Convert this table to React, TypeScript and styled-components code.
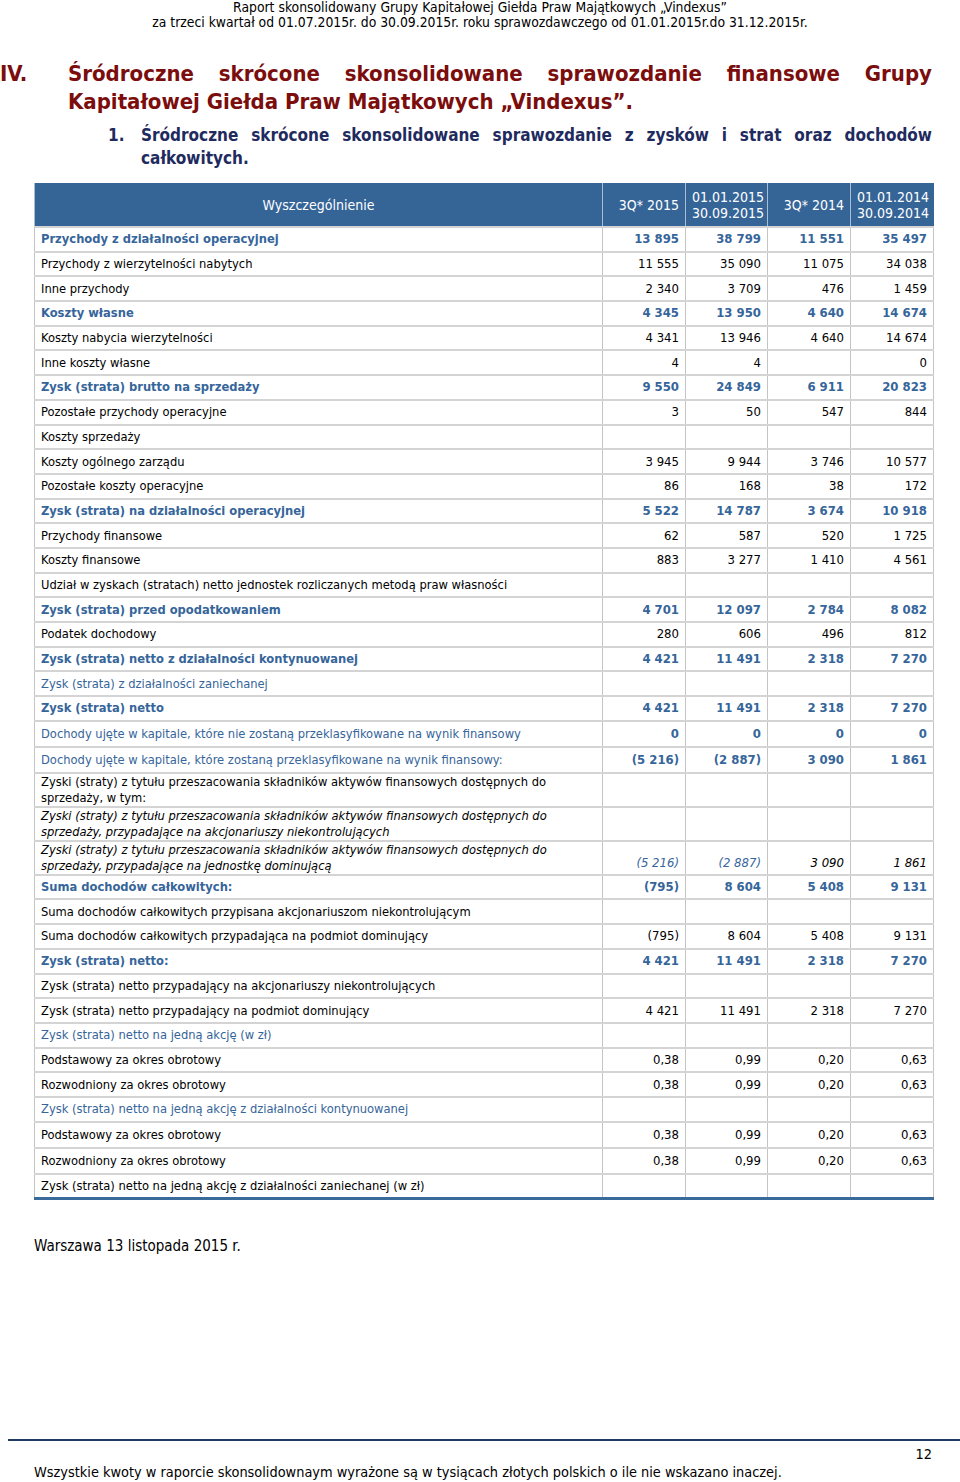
import React from "react";
import styled, { createGlobalStyle, css } from "styled-components";

const Global = createGlobalStyle`
  html, body { margin: 0; padding: 0; background: #ffffff; }
  body { font-family: "DejaVu Sans Condensed", "DejaVu Sans", sans-serif; color: #000; }
`;

const Page = styled.div`
  width: 960px;
  height: 1482px;
  display: flex;
  flex-direction: column;
  box-sizing: border-box;
  overflow: hidden;
`;

const TopHeader = styled.header`
  font-family: "Liberation Sans Narrow", "DejaVu Sans Condensed", sans-serif;
  font-size: 13.8px;
  line-height: 15px;
  text-align: center;
  color: #000;
`;

const SectionTitle = styled.h1`
  margin: 30px 28px 0 0;
  display: grid;
  grid-template-columns: 68px 1fr;
  font-family: "DejaVu Sans Condensed", "DejaVu Sans", sans-serif;
  font-weight: bold;
  font-size: 22px;
  line-height: 28px;
  color: #7b0d0d;
`;

const SubTitle = styled.h2`
  margin: 8px 28px 0 108px;
  display: grid;
  grid-template-columns: 33px 1fr;
  font-family: "DejaVu Sans Condensed", "DejaVu Sans", sans-serif;
  font-weight: bold;
  font-size: 17px;
  line-height: 23px;
  color: #1f2b5e;
`;

const Justified = styled.span`
  text-align: justify;
  text-align-last: left;
`;

const Table = styled.table`
  margin: 13px 0 0 34px;
  width: 899px;
  border-collapse: collapse;
  table-layout: fixed;
  font-size: 13px;
  border-left: 1px solid #c4c4c4;
  border-bottom: 3px solid #3a6a9c;
`;

const HeadCell = styled.th<{ $left?: boolean }>`
  background: #356497;
  color: #ffffff;
  font-weight: normal;
  font-size: 14px;
  line-height: 16px;
  height: 44px;
  padding: 0 6px;
  box-sizing: border-box;
  text-align: ${(p) => (p.$left ? "center" : "right")};
  border-left: 1px solid #a9bdd3;
`;

type Kind = "plain" | "strong" | "accent" | "italic" | "italicAccent";

const kindStyle = (k: Kind) => {
  switch (k) {
    case "strong":
      return css`font-weight: bold; color: #36659a;`;
    case "accent":
      return css`color: #36659a;`;
    case "italic":
      return css`font-style: italic; color: #000;`;
    case "italicAccent":
      return css`font-style: italic; color: #36659a;`;
    default:
      return css`color: #000;`;
  }
};

const Row = styled.tr<{ $h: number }>`
  height: ${(p) => p.$h}px;
`;

const LabelCell = styled.td<{ $kind: Kind }>`
  padding: 0 6px;
  line-height: 16px;
  font-size: 12.8px;
  border-top: 2px solid #d4d4d4;
  border-right: 1px solid #c4c4c4;
  ${(p) => kindStyle(p.$kind)}
`;

const NumCell = styled.td<{ $kind: Kind }>`
  padding: 0 6px;
  text-align: right;
  line-height: 16px;
  white-space: nowrap;
  border-top: 2px solid #d4d4d4;
  border-right: 1px solid #c4c4c4;
  vertical-align: ${(p) => (p.$kind === "italic" || p.$kind === "italicAccent" ? "bottom" : "middle")};
  padding-bottom: ${(p) => (p.$kind === "italic" || p.$kind === "italicAccent" ? "3px" : "0")};
  ${(p) => kindStyle(p.$kind)}
`;

const Place = styled.p`
  margin: 37px 0 0 34px;
  font-size: 15px;
  line-height: 18px;
`;

const Footer = styled.footer`
  margin-top: auto;
  margin-left: 8px;
  border-top: 2px solid #1f3a63;
  font-family: "Liberation Sans Narrow", "DejaVu Sans Condensed", sans-serif;
  font-size: 14.4px;
  line-height: 18px;
  padding-bottom: 1px;
`;

const PageNo = styled.div`
  text-align: right;
  padding: 4px 28px 0 0;
`;

const Note = styled.div`
  padding-left: 26px;
`;

type RowDef = {
  label: string;
  kind: Kind;
  values?: (string | [string, Kind])[];
  valueKind?: Kind;
  h?: number;
};

const R = (label: string, kind: Kind, values?: (string | [string, Kind])[], extra?: Partial<RowDef>): RowDef => ({
  label,
  kind,
  values,
  ...extra,
});

const rows: RowDef[] = [
  R("Przychody z działalności operacyjnej", "strong", ["13 895", "38 799", "11 551", "35 497"]),
  R("Przychody z wierzytelności nabytych", "plain", ["11 555", "35 090", "11 075", "34 038"]),
  R("Inne przychody", "plain", ["2 340", "3 709", "476", "1 459"]),
  R("Koszty własne", "strong", ["4 345", "13 950", "4 640", "14 674"]),
  R("Koszty nabycia wierzytelności", "plain", ["4 341", "13 946", "4 640", "14 674"]),
  R("Inne koszty własne", "plain", ["4", "4", "", "0"]),
  R("Zysk (strata) brutto na sprzedaży", "strong", ["9 550", "24 849", "6 911", "20 823"]),
  R("Pozostałe przychody operacyjne", "plain", ["3", "50", "547", "844"]),
  R("Koszty sprzedaży", "plain"),
  R("Koszty ogólnego zarządu", "plain", ["3 945", "9 944", "3 746", "10 577"]),
  R("Pozostałe koszty operacyjne", "plain", ["86", "168", "38", "172"]),
  R("Zysk (strata) na działalności operacyjnej", "strong", ["5 522", "14 787", "3 674", "10 918"]),
  R("Przychody finansowe", "plain", ["62", "587", "520", "1 725"]),
  R("Koszty finansowe", "plain", ["883", "3 277", "1 410", "4 561"]),
  R("Udział w zyskach (stratach) netto jednostek rozliczanych metodą praw własności", "plain"),
  R("Zysk (strata) przed opodatkowaniem", "strong", ["4 701", "12 097", "2 784", "8 082"]),
  R("Podatek dochodowy", "plain", ["280", "606", "496", "812"]),
  R("Zysk (strata) netto z działalności kontynuowanej", "strong", ["4 421", "11 491", "2 318", "7 270"]),
  R("Zysk (strata) z działalności zaniechanej", "accent"),
  R("Zysk (strata) netto", "strong", ["4 421", "11 491", "2 318", "7 270"]),
  R("Dochody ujęte w kapitale, które nie zostaną przeklasyfikowane na wynik finansowy", "accent", ["0", "0", "0", "0"], { valueKind: "strong", h: 26 }),
  R("Dochody ujęte w kapitale, które zostaną przeklasyfikowane na wynik finansowy:", "accent", ["(5 216)", "(2 887)", "3 090", "1 861"], { valueKind: "strong", h: 26 }),
  R("Zyski (straty) z tytułu przeszacowania składników aktywów finansowych dostępnych do sprzedaży, w tym:", "plain", undefined, { h: 33 }),
  R("Zyski (straty) z tytułu przeszacowania składników aktywów finansowych dostępnych do sprzedaży, przypadające na akcjonariuszy niekontrolujących", "italic", undefined, { h: 33 }),
  R("Zyski (straty) z tytułu przeszacowania składników aktywów finansowych dostępnych do sprzedaży, przypadające na jednostkę dominującą", "italic", [["(5 216)", "italicAccent"], ["(2 887)", "italicAccent"], ["3 090", "italic"], ["1 861", "italic"]], { h: 33 }),
  R("Suma dochodów całkowitych:", "strong", ["(795)", "8 604", "5 408", "9 131"]),
  R("Suma dochodów całkowitych przypisana akcjonariuszom niekontrolującym", "plain"),
  R("Suma dochodów całkowitych przypadająca na podmiot dominujący", "plain", ["(795)", "8 604", "5 408", "9 131"]),
  R("Zysk (strata) netto:", "strong", ["4 421", "11 491", "2 318", "7 270"]),
  R("Zysk (strata) netto przypadający na akcjonariuszy niekontrolujących", "plain"),
  R("Zysk (strata) netto przypadający na podmiot dominujący", "plain", ["4 421", "11 491", "2 318", "7 270"]),
  R("Zysk (strata) netto na jedną akcję (w zł)", "accent"),
  R("Podstawowy za okres obrotowy", "plain", ["0,38", "0,99", "0,20", "0,63"]),
  R("Rozwodniony za okres obrotowy", "plain", ["0,38", "0,99", "0,20", "0,63"]),
  R("Zysk (strata) netto na jedną akcję z działalności kontynuowanej", "accent"),
  R("Podstawowy za okres obrotowy", "plain", ["0,38", "0,99", "0,20", "0,63"], { h: 26 }),
  R("Rozwodniony za okres obrotowy", "plain", ["0,38", "0,99", "0,20", "0,63"], { h: 26 }),
  R("Zysk (strata) netto na jedną akcję z działalności zaniechanej (w zł)", "plain", undefined, { h: 25 }),
];

export default function App() {
  return (
    <Page>
      <Global />
      <TopHeader>
        <div>Raport skonsolidowany Grupy Kapitałowej Giełda Praw Majątkowych „Vindexus”</div>
        <div>za trzeci kwartał od 01.07.2015r. do 30.09.2015r. roku sprawozdawczego od 01.01.2015r.do 31.12.2015r.</div>
      </TopHeader>

      <SectionTitle>
        <span>IV.</span>
        <Justified>Śródroczne skrócone skonsolidowane sprawozdanie finansowe Grupy Kapitałowej Giełda Praw Majątkowych „Vindexus”.</Justified>
      </SectionTitle>

      <SubTitle>
        <span>1.</span>
        <Justified>Śródroczne skrócone skonsolidowane sprawozdanie z zysków i strat oraz dochodów całkowitych.</Justified>
      </SubTitle>

      <Table>
        <colgroup>
          <col style={{ width: 568 }} />
          <col style={{ width: 83 }} />
          <col style={{ width: 82 }} />
          <col style={{ width: 83 }} />
          <col style={{ width: 83 }} />
        </colgroup>
        <thead>
          <tr>
            <HeadCell $left>Wyszczególnienie</HeadCell>
            <HeadCell>3Q* 2015</HeadCell>
            <HeadCell>
              01.01.2015
              <br />
              30.09.2015
            </HeadCell>
            <HeadCell>3Q* 2014</HeadCell>
            <HeadCell>
              01.01.2014
              <br />
              30.09.2014
            </HeadCell>
          </tr>
        </thead>
        <tbody>
          {rows.map((r, i) => {
            const vals = r.values ?? ["", "", "", ""];
            return (
              <Row key={i} $h={r.h ?? 24.7}>
                <LabelCell $kind={r.kind}>{r.label}</LabelCell>
                {vals.map((v, j) => {
                  const [text, k] = Array.isArray(v) ? v : [v, r.valueKind ?? r.kind];
                  return (
                    <NumCell key={j} $kind={k}>
                      {text}
                    </NumCell>
                  );
                })}
              </Row>
            );
          })}
        </tbody>
      </Table>

      <Place>Warszawa 13 listopada 2015 r.</Place>

      <Footer>
        <PageNo>12</PageNo>
        <Note>Wszystkie kwoty w raporcie skonsolidownaym wyrażone są w tysiącach złotych polskich o ile nie wskazano inaczej.</Note>
      </Footer>
    </Page>
  );
}
